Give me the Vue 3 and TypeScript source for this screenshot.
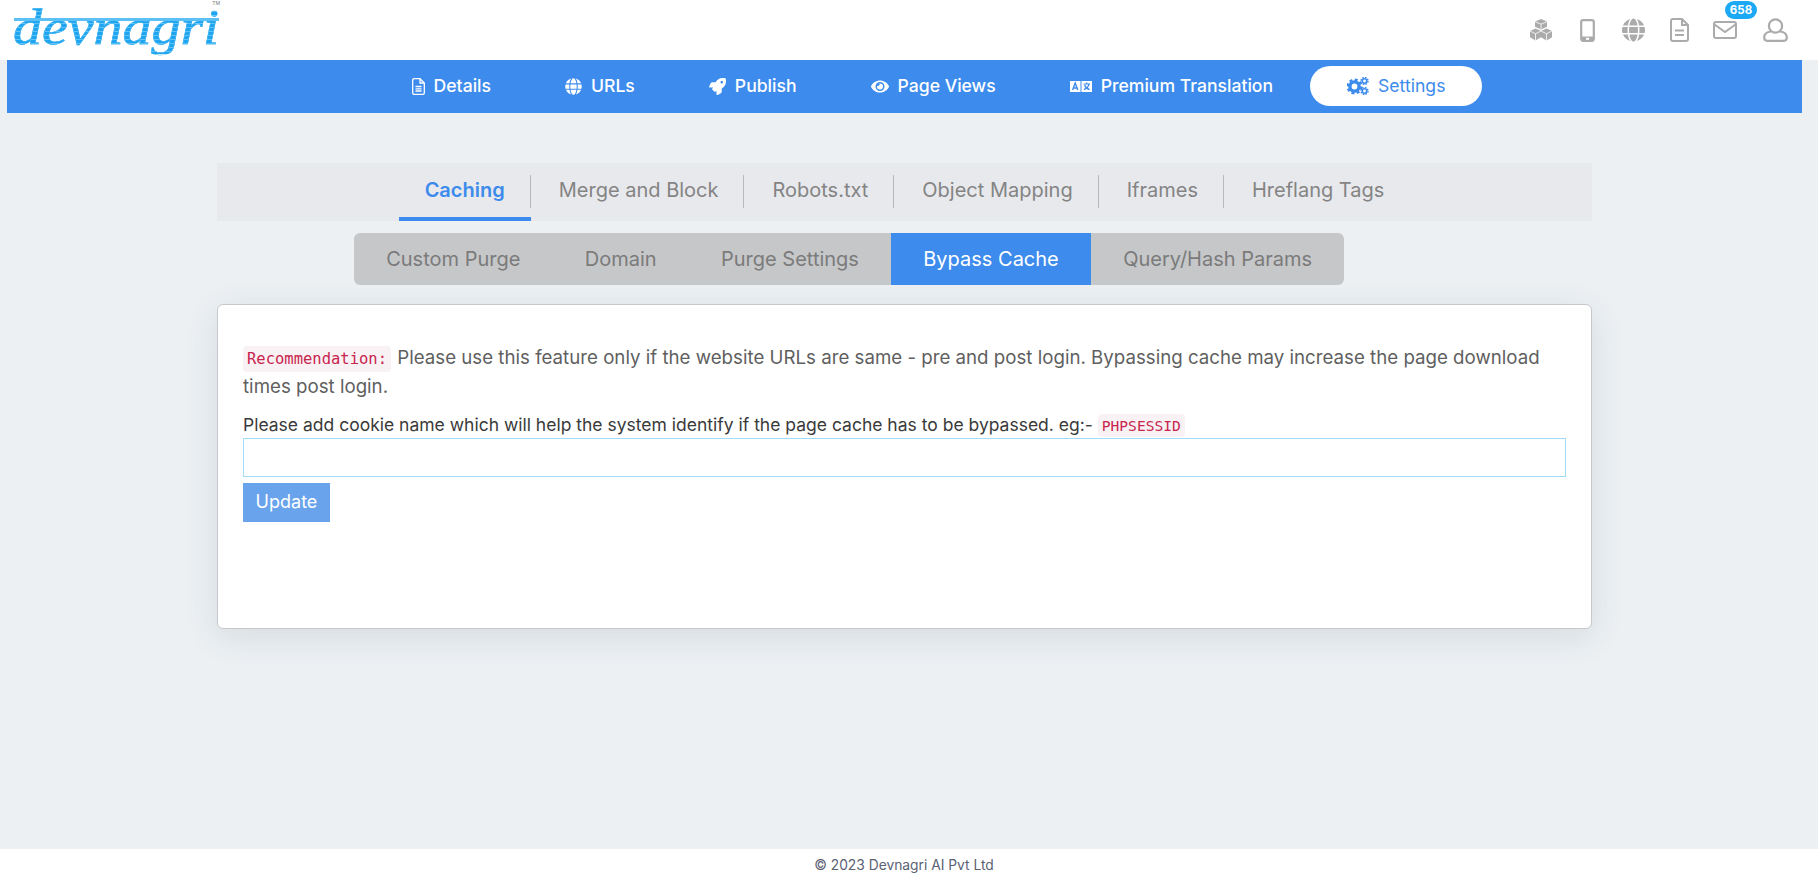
<script setup lang="ts">
const navItems = [
  { label: 'Details', icon: 'file' },
  { label: 'URLs', icon: 'globe' },
  { label: 'Publish', icon: 'rocket' },
  { label: 'Page Views', icon: 'eye' },
  { label: 'Premium Translation', icon: 'language' },
  { label: 'Settings', icon: 'cogs', active: true },
]

const tabs = ['Caching', 'Merge and Block', 'Robots.txt', 'Object Mapping', 'Iframes', 'Hreflang Tags']
const subTabs = ['Custom Purge', 'Domain', 'Purge Settings', 'Bypass Cache', 'Query/Hash Params']

const globePath =
  'M336.5 160C322 70.7 287.8 8 248 8s-74 62.7-88.5 152h177zM152 256c0 22.2 1.2 43.5 3.3 64h185.3c2.1-20.5 3.3-41.8 3.3-64s-1.2-43.5-3.3-64H155.3c-2.1 20.5-3.3 41.8-3.3 64zm324.7-96c-28.6-67.9-86.5-120.4-158-141.6 24.4 33.8 41.2 84.7 50 141.6h108zM177.2 18.4C105.8 39.6 47.8 92.1 19.3 160h108c8.7-56.9 25.5-107.8 49.9-141.6zM487.4 192H372.7c2.1 21 3.3 42.5 3.3 64s-1.2 43-3.3 64h114.6c5.5-20.5 8.6-41.8 8.6-64s-3.1-43.5-8.5-64zM120 256c0-21.5 1.2-43 3.3-64H8.6C3.2 212.5 0 233.8 0 256s3.2 43.5 8.6 64h114.6c-2-21-3.2-42.5-3.2-64zm39.5 96c14.5 89.3 48.7 152 88.5 152s74-62.7 88.5-152h-177zm159.3 141.6c71.4-21.2 129.4-73.7 158-141.6h-108c-8.8 56.9-25.6 107.8-50 141.6zM19.3 352c28.6 67.9 86.5 120.4 158 141.6-24.4-33.8-41.2-84.7-50-141.6h-108z'
</script>

<template>
  <div class="page">
    <header class="topbar">
      <div class="logo">
        <span class="logo-text">devnagri</span>
        <span class="logo-line"></span>
        <span class="logo-tm">TM</span>
      </div>
      <div class="top-icons">
        <span class="top-icon">
          <svg width="24" height="22" viewBox="0 0 24 22">
            <g fill="#ababab">
              <path d="M12 0l6 2.4v5.4L12 10.4 6 7.8V2.4z" />
              <path d="M6.5 9.6l5.5 2.4v6.2L6.5 21.5 1 18.2v-6.2z" />
              <path d="M17.5 9.6l5.5 2.4v6.2l-5.5 3.3-5.5-3.3V12z" />
            </g>
            <g fill="none" stroke="#fff" stroke-width="0.8">
              <path d="M6 2.6l6 2.6 6-2.6M12 5.2v5" />
              <path d="M1 12l5.5 2.8L12 12M6.5 14.8v6.7" />
              <path d="M12 12l5.5 2.8L23 12M17.5 14.8v6.7" />
            </g>
          </svg>
        </span>
        <span class="top-icon">
          <svg width="15" height="23" viewBox="0 0 15 23">
            <rect x="1.2" y="1.2" width="12.6" height="20.6" rx="2" fill="none" stroke="#ababab" stroke-width="2.2" />
            <rect x="1" y="17.5" width="13" height="4.5" rx="1" fill="#ababab" />
            <rect x="6" y="18.8" width="3" height="2" fill="#fff" />
          </svg>
        </span>
        <span class="top-icon">
          <svg width="23" height="24" viewBox="0 0 496 512"><path :d="globePath" fill="#ababab" /></svg>
        </span>
        <span class="top-icon">
          <svg width="19" height="24" viewBox="0 0 19 24" fill="none" stroke="#ababab" stroke-width="2">
            <path d="M12 1H3a2 2 0 0 0-2 2v18a2 2 0 0 0 2 2h13a2 2 0 0 0 2-2V7z" stroke-linejoin="round" />
            <path d="M12 1v6h6" />
            <path d="M5 12.5h9M5 17h9" />
          </svg>
        </span>
        <span class="top-icon mail">
          <svg width="24" height="18" viewBox="0 0 24 18" fill="none" stroke="#ababab" stroke-width="2">
            <rect x="1" y="1" width="22" height="16" rx="2" />
            <path d="M1.5 3.5l10.5 7.5 10.5-7.5" />
          </svg>
          <span class="badge">658</span>
        </span>
        <span class="top-icon user">
          <svg width="25" height="24" viewBox="0 0 25 24" fill="none" stroke="#ababab" stroke-width="2.2">
            <circle cx="12.5" cy="8" r="6.6" />
            <path d="M8 13.5C4 14 1.2 16 1.2 19.5c0 2 1.2 3.3 3 3.3h16.6c1.8 0 3-1.3 3-3.3 0-3.5-2.8-5.5-6.8-6" />
          </svg>
        </span>
      </div>
    </header>

    <main class="content">
      <nav class="mainnav">
        <a v-for="item in navItems" :key="item.label" class="nav-item" :class="{ active: item.active }">
          <svg v-if="item.icon === 'file'" class="nav-svg" width="13" height="17" viewBox="0 0 13 17" fill="none" stroke="currentColor" stroke-width="1.3">
            <path d="M8 .7H2A1.3 1.3 0 0 0 .7 2v13A1.3 1.3 0 0 0 2 16.3h9a1.3 1.3 0 0 0 1.3-1.3V5z" />
            <path d="M8 .7V5h4.3M3.5 8.5h6M3.5 10.8h6M3.5 13h6" />
          </svg>
          <svg v-else-if="item.icon === 'globe'" class="nav-svg" width="17" height="17" viewBox="0 0 496 512"><path :d="globePath" fill="currentColor" /></svg>
          <svg v-else-if="item.icon === 'rocket'" class="nav-svg" width="17" height="17" viewBox="0 0 512 512">
            <path fill="currentColor" d="M505.12 19.09c-1.19-5.53-6.66-11-12.21-12.18C460.72 0 435.51 0 410.41 0 307.18 0 245.27 55.2 199.05 128H94.84c-16.35.02-35.56 11.88-42.89 26.48L2.52 253.3A28.4 28.4 0 0 0 0 264a24 24 0 0 0 24 24h103.81l-22.47 22.47c-11.37 11.36-13 32.26 0 45.25l50.9 50.91c11.16 11.19 32.16 13.16 45.28 0L224 384.16V488a24 24 0 0 0 24 24 28.56 28.56 0 0 0 10.71-2.52l98.73-49.39c14.63-7.3 26.51-26.5 26.51-42.86V312.8C456.54 266.48 512 204.39 512 101.7c0-25.2 0-50.4-6.88-82.61zM384.04 168a40 40 0 1 1 40-40 40.02 40.02 0 0 1-40 40z" />
          </svg>
          <svg v-else-if="item.icon === 'eye'" class="nav-svg" width="18" height="17" viewBox="0 0 576 512">
            <path fill="currentColor" d="M572.52 241.4C518.29 135.59 410.93 64 288 64S57.68 135.64 3.48 241.41a32.35 32.35 0 0 0 0 29.19C57.71 376.41 165.07 448 288 448s230.32-71.64 284.52-177.41a32.35 32.35 0 0 0 0-29.19zM288 400a144 144 0 1 1 144-144 143.93 143.93 0 0 1-144 144zm0-240a95.31 95.31 0 0 0-25.31 3.79 47.85 47.85 0 0 1-66.9 66.9A95.78 95.78 0 1 0 288 160z" />
          </svg>
          <svg v-else-if="item.icon === 'language'" class="nav-svg" width="22" height="13" viewBox="0 0 22 13">
            <rect x="0" y="1" width="10.5" height="11" fill="currentColor" />
            <rect x="11.5" y="1" width="10.5" height="11" fill="currentColor" />
            <path d="M2.6 10L5.2 3l2.6 7M3.6 8h3.2" fill="none" stroke="#3d8bec" stroke-width="1.4" />
            <path d="M13.5 4h6.5M16.7 2.6v1.6M19 4c-.6 2.6-2.4 4.6-5 5.6M14.6 5c.6 2 2.4 3.8 5 4.6" fill="none" stroke="#3d8bec" stroke-width="1.2" />
          </svg>
          <svg v-else class="nav-svg" width="22" height="18" viewBox="0 0 22 18" fill="none" stroke="currentColor">
            <circle cx="7.5" cy="9.5" r="4.6" stroke-width="3.4" />
            <circle cx="7.5" cy="9.5" r="6.8" stroke-width="2.4" stroke-dasharray="3 2.34" />
            <circle cx="17.5" cy="4" r="2.2" stroke-width="1.6" />
            <circle cx="17.5" cy="4" r="3.5" stroke-width="1.4" stroke-dasharray="1.6 1.15" />
            <circle cx="17.5" cy="14" r="2.2" stroke-width="1.6" />
            <circle cx="17.5" cy="14" r="3.5" stroke-width="1.4" stroke-dasharray="1.6 1.15" />
          </svg>
          <span class="nav-label">{{ item.label }}</span>
        </a>
      </nav>

      <div class="tabs">
        <a v-for="(tab, i) in tabs" :key="tab" class="tab" :class="{ current: i === 0 }">
          <span>{{ tab }}</span>
        </a>
      </div>

      <div class="subtabs-row">
        <div class="subtabs">
          <a v-for="sub in subTabs" :key="sub" class="subtab" :class="{ current: sub === 'Bypass Cache' }">{{ sub }}</a>
        </div>
      </div>

      <section class="card">
        <p class="note">
          <code class="rec">Recommendation:</code>
          Please use this feature only if the website URLs are same - pre and post login. Bypassing cache may increase the page download times post login.
        </p>
        <label class="field-label">
          Please add cookie name which will help the system identify if the page cache has to be bypassed. eg:-
          <code class="cookie">PHPSESSID</code>
        </label>
        <input class="field" type="text" />
        <button class="update" type="button">Update</button>
      </section>
    </main>

    <footer class="foot">© 2023 Devnagri AI Pvt Ltd</footer>
  </div>
</template>

<style>
html,
body {
  margin: 0;
  background: #ecf0f3;
}
</style>

<style scoped>
.page {
  min-height: 875px;
  height: 875px;
  display: flex;
  flex-direction: column;
  overflow: hidden;
  background: #ecf0f3;
  font-family: Inter, "Liberation Sans", sans-serif;
}

.topbar {
  height: 60px;
  flex: none;
  background: #fff;
  display: flex;
  justify-content: space-between;
  align-items: center;
  padding-right: 19px;
}

.logo {
  position: relative;
  width: 206px;
  height: 60px;
  margin-left: 13px;
}

.logo-text {
  display: block;
  width: 176px;
  font-family: "Liberation Serif", serif;
  font-style: italic;
  font-size: 50px;
  line-height: 54px;
  white-space: nowrap;
  color: transparent;
  background: repeating-linear-gradient(#1fa5ef 0 3px, #62c4f6 3px 4px);
  background-clip: text;
  -webkit-background-clip: text;
  transform: scaleX(1.16);
  transform-origin: left center;
  -webkit-text-stroke: 0.5px #3fb2f2;
}

.logo-line {
  position: absolute;
  left: 1px;
  right: 0;
  top: 18px;
  height: 3px;
  background: #5cc0f4;
}

.logo-tm {
  position: absolute;
  right: -1px;
  top: 0;
  font-size: 5px;
  color: #777;
}

.top-icons {
  display: flex;
  align-items: center;
}

.top-icon {
  position: relative;
  width: 46px;
  height: 24px;
  display: flex;
  align-items: center;
  justify-content: center;
}

.user {
  width: 48px;
  margin-left: 3px;
}

.badge {
  position: absolute;
  left: 23px;
  top: -17px;
  width: 32px;
  height: 18px;
  border-radius: 9px;
  background: #1ba9f5;
  color: #fff;
  font-size: 11.5px;
  font-weight: 700;
  line-height: 18px;
  text-align: center;
}

.content {
  flex: 1;
  padding: 0 16px 0 7px;
}

.mainnav {
  height: 53px;
  background: #3d8bec;
  display: flex;
  align-items: center;
  justify-content: center;
  padding: 0 0 1px 48px;
  box-sizing: border-box;
}

.nav-item {
  display: flex;
  align-items: center;
  gap: 9px;
  height: 40px;
  padding: 0 37px;
  color: #fff;
  font-size: 17.6px;
  font-weight: 500;
  white-space: nowrap;
}

.nav-label {
  margin-top: -1px;
}

.nav-item.active {
  background: #fff;
  color: #3d8bec;
  border-radius: 20px;
  font-weight: 400;
}

.nav-svg {
  flex: none;
}

.tabs {
  width: 1375px;
  height: 58px;
  margin: 50px auto 0;
  background: #e8e9ed;
  display: flex;
  justify-content: center;
}

.tab {
  position: relative;
  height: 58px;
  padding: 0 26px 0 28px;
  display: flex;
  align-items: center;
  font-size: 20px;
  color: #848484;
  white-space: nowrap;
}

.tab span {
  margin-top: -5px;
}

.tab:not(:last-child)::after {
  content: "";
  position: absolute;
  right: 0;
  top: 12px;
  height: 33px;
  width: 1px;
  background: #b9b9b9;
}

.tab.current {
  padding-left: 26px;
  color: #3d8bec;
  font-weight: 600;
  box-shadow: inset 0 -4px 0 #3d8bec;
}

.subtabs-row {
  width: 1375px;
  margin: 12px auto 0;
  box-sizing: border-box;
  padding-left: 137px;
  display: flex;
}

.subtabs {
  display: flex;
  height: 52px;
  background: #c6c7c9;
  border-radius: 6px;
  overflow: hidden;
}

.subtab {
  display: flex;
  align-items: center;
  padding: 0 32.2px;
  font-size: 20px;
  color: #7b7b7b;
  white-space: nowrap;
}

.subtab.current {
  background: #3d8bec;
  color: #fff;
}

.card {
  width: 1375px;
  height: 325px;
  margin: 19px auto 0;
  box-sizing: border-box;
  padding: 39px 25px 0;
  background: #fff;
  border: 1px solid #c6c8cc;
  border-radius: 6px;
  box-shadow: 0 8px 32px rgba(60, 70, 90, 0.12);
  display: flex;
  flex-direction: column;
  align-items: flex-start;
}

.note {
  margin: 0 0 12px;
  font-size: 18.7px;
  line-height: 28px;
  color: #5f5f5f;
}

.rec,
.cookie {
  font-family: "DejaVu Sans Mono", "Liberation Mono", monospace;
  color: #c7254e;
  background: #f9f2f4;
  border-radius: 4px;
}

.rec {
  font-size: 15.5px;
  padding: 4px 4px;
  margin-right: 1px;
}

.cookie {
  font-size: 14.6px;
  padding: 3px 4px;
}

.field-label {
  font-size: 17.5px;
  line-height: 24px;
  color: #3a3a3a;
}

.field {
  width: 100%;
  height: 39px;
  box-sizing: border-box;
  border: 1px solid #a0dcf9;
  outline: none;
  margin: 0 0 6px;
  padding: 0 8px;
  background: #fff;
}

.update {
  width: 87px;
  height: 39px;
  border: none;
  background: #69a3ec;
  color: #fff;
  font-family: inherit;
  font-size: 18px;
  padding: 0 0 2px;
}

.foot {
  height: 26px;
  flex: none;
  background: #fff;
  padding: 6px 10px 0 0;
  box-sizing: border-box;
  text-align: center;
  font-size: 13.8px;
  line-height: 20px;
  color: #5a6172;
}
</style>
